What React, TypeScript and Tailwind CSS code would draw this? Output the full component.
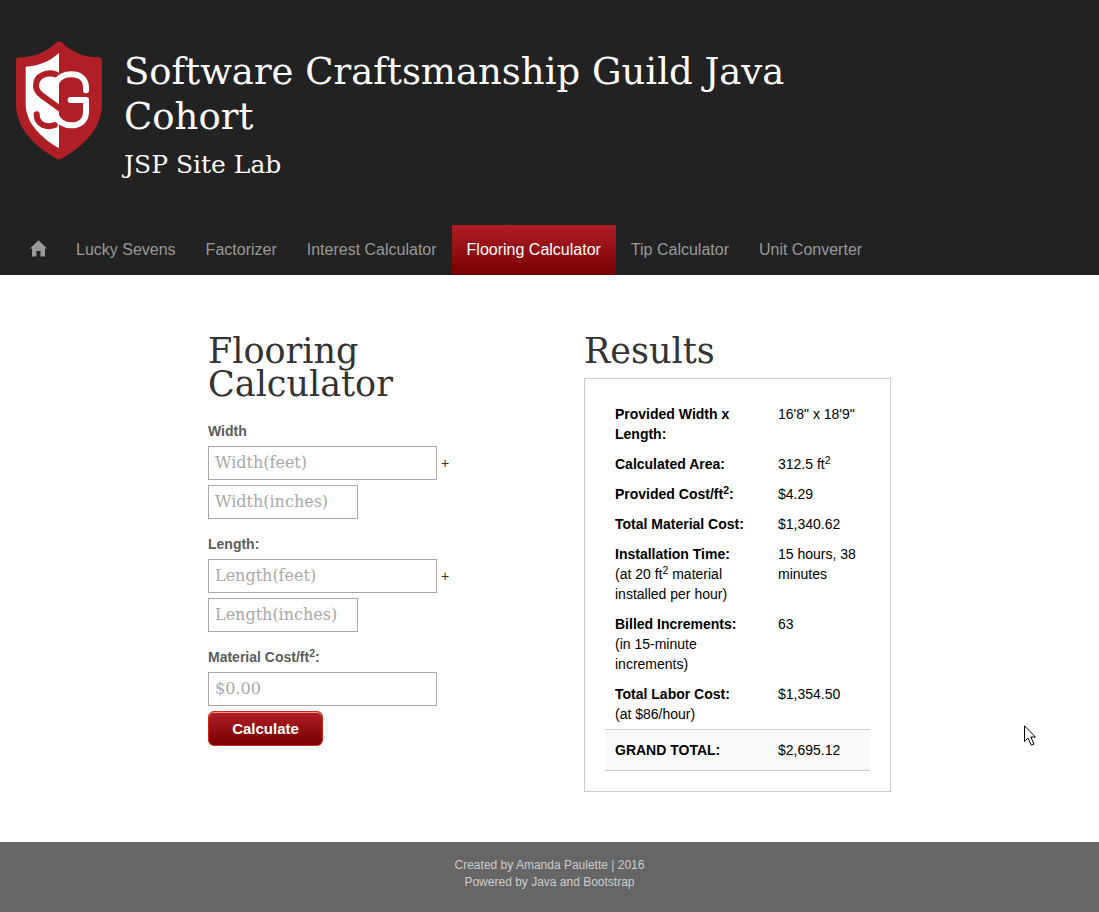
import type { ReactNode } from "react";

const slab = "font-['DejaVu_Serif',serif]";

const tabs = ["Lucky Sevens", "Factorizer", "Interest Calculator", "Flooring Calculator", "Tip Calculator", "Unit Converter"];

function Logo() {
  return (
    <svg viewBox="48 32 258 357" className="h-[119px] w-[86px] shrink-0" role="img" aria-label="Software Craftsmanship Guild">
      <path
        d="M170 35Q177 31 184 35C211 63 251 82 298 81Q306 81 306 89V220C306 291 254 346 184 385Q177 389 170 385C100 346 48 291 48 220V89Q48 81 56 81C103 82 143 63 170 35Z"
        fill="#b01e26"
      />
      <path d="M177 68C148 94 116 107 77 109V222C77 278 124 323 177 354Z" fill="#fff" />
      <path
        d="M168 132C142 124 108 134 108 166C108 180 116 188 126 196L180 235M110 252C110 286 142 292 164 284"
        fill="none"
        stroke="#b01e26"
        strokeWidth="18"
        strokeLinecap="round"
      />
      <path
        d="M258 180V172C258 146 240 132 214 132C194 132 179 139 170 154M168 256C176 275 192 285 214 285C241 285 258 269 258 245V209H212"
        fill="none"
        stroke="#fff"
        strokeWidth="18"
        strokeLinecap="round"
        strokeLinejoin="round"
      />
    </svg>
  );
}

function HomeIcon() {
  return (
    <svg viewBox="0 0 16 17" className="h-[17px] w-4 overflow-visible" fill="currentColor" aria-hidden="true">
      <path d="M8.500 0.300L17 8.600H15V16Q15 16.500 14.500 16.500H10.500V11H6.500V16.500H2.500Q2 16.500 2 16V8.600H0Z" />
    </svg>
  );
}

function Pointer() {
  return (
    <svg viewBox="0 0 12 21" className="pointer-events-none absolute top-[450px] right-[63px] h-[21px] w-3" aria-hidden="true">
      <path d="M0.500 0.800V16.500L4 13L7.300 20.200L10 19L6.800 12H11.400Z" fill="#fff" stroke="#000" />
    </svg>
  );
}

function Field({ id, label, placeholder, short }: { id: string; label: string; placeholder: string; short?: boolean }) {
  return (
    <input
      id={id}
      aria-label={label}
      placeholder={placeholder}
      className={`${slab} block h-[34px] border border-[#a9a9a9] bg-white px-[6px] pb-[2px] text-[16px] text-[#555] placeholder:text-[#a9a9a9] ${short ? "w-[150px]" : "w-[229px]"}`}
    />
  );
}

function Dimension({ id, name, title }: { id: string; name: string; title: string }) {
  return (
    <div className="mb-[15px] flex flex-col gap-[5px]">
      <label htmlFor={id} className="font-bold text-[#5c5c5c]">{title}</label>
      <div className="flex items-center gap-1">
        <Field id={id} label={`${name} in feet`} placeholder={`${name}(feet)`} />
        <span>+</span>
      </div>
      <Field id={`${id}-inches`} label={`${name} in inches`} placeholder={`${name}(inches)`} short />
    </div>
  );
}

function Row({ title, note, children }: { title: ReactNode; note?: ReactNode; children: ReactNode }) {
  return (
    <tr className="align-top">
      <th scope="row" className="w-[163px] px-[10px] py-[5px] text-left font-normal">
        <strong className="block">{title}</strong>
        {note}
      </th>
      <td className="px-[10px] py-[5px]">{children}</td>
    </tr>
  );
}

export default function App() {
  return (
    <div className="flex min-h-screen flex-col bg-white font-['Liberation_Sans',Arial,sans-serif] text-[14px] leading-5 text-[#333]">
      <header className="bg-[#222]">
        <div className="flex items-start gap-[22px] px-4 pt-[41px]">
          <Logo />
          <div className={`${slab} max-w-[700px] pt-2 pb-[42px] text-white`}>
            <h1 className="text-[37px] leading-[45px]">Software Craftsmanship Guild Java Cohort</h1>
            <p className="mt-2 text-[25px] leading-9">JSP Site Lab</p>
          </div>
        </div>
        <nav className="flex px-[15px] text-[16px] text-[#999]" aria-label="Main">
          <a href="#home" aria-label="Home" className="flex h-[50px] items-center px-[15px] pb-1">
            <HomeIcon />
          </a>
          {tabs.map((tab) => (
            <a
              key={tab}
              href="#"
              className={`flex h-[50px] items-center px-[15px] whitespace-nowrap ${tab === "Flooring Calculator" ? "bg-linear-to-b from-[#b01e26] to-[#750000] text-white" : ""}`}
            >
              {tab}
            </a>
          ))}
        </nav>
      </header>

      <main className="relative grow">
        <div className="mx-auto flex max-w-[683px] items-start justify-between pt-[60px] pb-[50px]">
          <form className="w-[245px]">
            <h2 className={`${slab} mb-5 text-[35px] leading-[33px]`}>Flooring Calculator</h2>
            <Dimension id="width" name="Width" title="Width" />
            <Dimension id="length" name="Length" title="Length:" />
            <div className="flex flex-col items-start gap-[5px]">
              <label htmlFor="cost" className="font-bold text-[#5c5c5c]">
                Material Cost/ft<sup>2</sup>:
              </label>
              <Field id="cost" label="Material cost per square foot" placeholder="$0.00" />
              <button
                type="button"
                className="h-[35px] w-[115px] rounded-[6px] border border-[#d02718] bg-linear-to-b from-[#b01e26] to-[#750000] text-[15px] font-bold text-white shadow-[inset_0_1px_0_0_#f29c93]"
              >
                Calculate
              </button>
            </div>
          </form>

          <section className="w-[307px]">
            <h2 className={`${slab} mb-[10px] text-[35px] leading-[33px]`}>Results</h2>
            <div className="border border-[#ccc] p-5">
              <table className="w-full border-collapse text-black">
                <tbody>
                  <Row title="Provided Width x Length:">16'8" x 18'9"</Row>
                  <Row title="Calculated Area:">312.5 ft<sup>2</sup></Row>
                  <Row title={<>Provided Cost/ft<sup>2</sup>:</>}>$4.29</Row>
                  <Row title="Total Material Cost:">$1,340.62</Row>
                  <Row title="Installation Time:" note={<>(at 20 ft<sup>2</sup> material installed per hour)</>}>15 hours, 38 minutes</Row>
                  <Row title="Billed Increments:" note="(in 15-minute increments)">63</Row>
                  <Row title="Total Labor Cost:" note="(at $86/hour)">$1,354.50</Row>
                </tbody>
                <tfoot>
                  <tr className="border-y border-[#ccc] bg-[#f9f9f9]">
                    <th scope="row" className="px-[10px] py-[10px] text-left font-bold">GRAND TOTAL:</th>
                    <td className="px-[10px] py-[10px]">$2,695.12</td>
                  </tr>
                </tfoot>
              </table>
            </div>
          </section>
        </div>
        <Pointer />
      </main>

      <footer className="bg-[#666] pt-[15px] pb-[21px] text-center text-[12px] leading-[17px] text-[#ccc]">
        <p>Created by Amanda Paulette | 2016</p>
        <p>Powered by Java and Bootstrap</p>
      </footer>
    </div>
  );
}
